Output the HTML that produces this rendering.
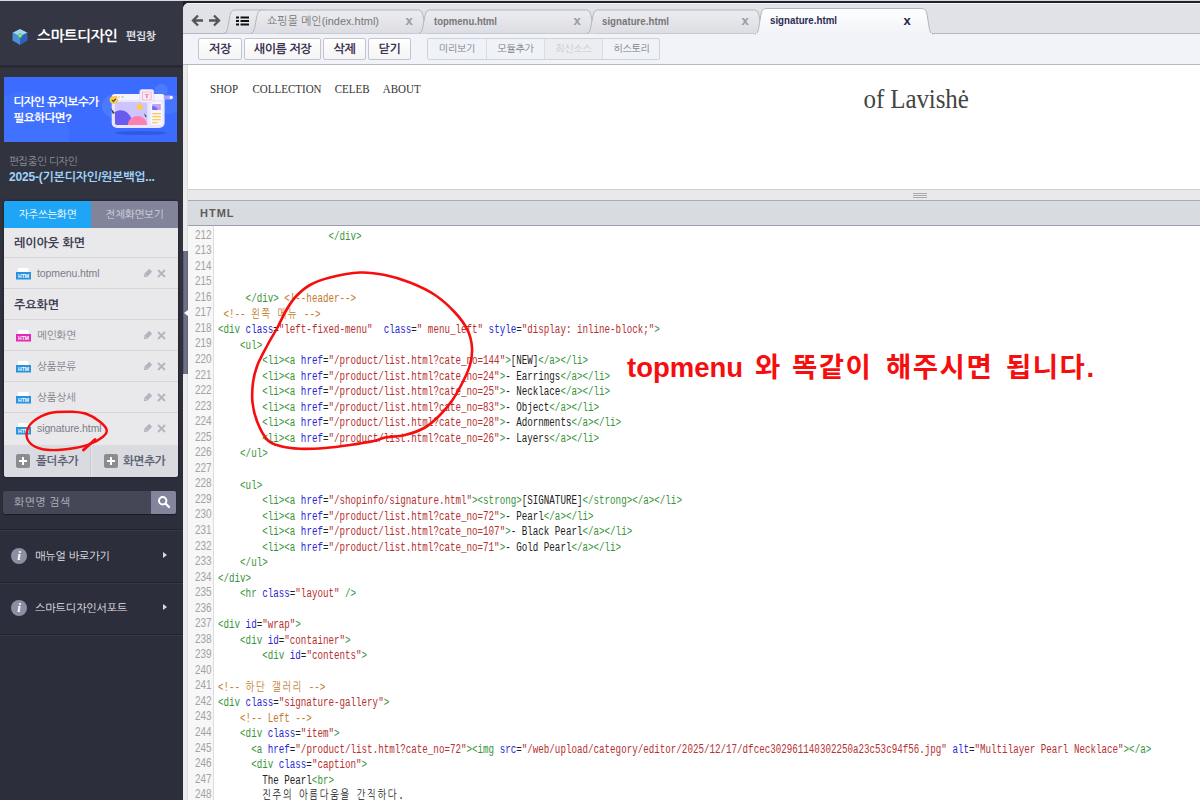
<!DOCTYPE html>
<html lang="ko">
<head>
<meta charset="utf-8">
<title>스마트디자인 편집창</title>
<style>
*{box-sizing:border-box;margin:0;padding:0}
html,body{width:1200px;height:800px;overflow:hidden}
body{position:relative;background:#2c2e3c;font-family:"Liberation Sans","NanumGothic",sans-serif;font-size:11px;color:#333}
.abs{position:absolute}
/* ---------- sidebar ---------- */
#side{position:absolute;left:0;top:0;width:183px;height:800px;background:linear-gradient(#31333f 190px,#2c2e3c 480px)}
#side .head{position:absolute;left:0;top:0;width:183px;height:65.5px;background:#353644;border-bottom:1px solid #2a2b38;box-shadow:0 1px 2px rgba(0,0,0,.35)}
#topline{position:absolute;left:0;top:0;width:1200px;height:1px;background:#d9dade;z-index:9}
#side .title{position:absolute;left:37px;top:26px;font-size:14.8px;font-weight:bold;color:#fff;letter-spacing:-0.5px;white-space:nowrap;line-height:20px}
#side .title2{position:absolute;left:126px;top:28px;font-size:11px;font-weight:bold;color:#e4e4ea;white-space:nowrap;line-height:16px;letter-spacing:-0.5px}
#banner{position:absolute;left:4px;top:77px;width:173px;height:65px;background:#3b6cff;overflow:hidden}
#banner .t{position:absolute;left:9.5px;top:16.5px;color:#fff;font-weight:bold;font-size:11.6px;line-height:16px;letter-spacing:-0.6px;white-space:nowrap}
.lbl1{position:absolute;left:9px;top:153.5px;font-size:10.5px;color:#8f909c;white-space:nowrap;line-height:14px;letter-spacing:-0.5px}
.lbl2{position:absolute;left:9px;top:170px;font-size:12px;font-weight:bold;color:#9fd4fb;white-space:nowrap;line-height:15px;letter-spacing:-0.2px}
#panel{position:absolute;left:4px;top:201px;width:174px;height:276px;background:#e9e9eb;border-radius:3px;overflow:hidden;box-shadow:0 0 3px rgba(0,0,0,.5)}
#panel .tabs{position:absolute;left:0;top:0;width:174px;height:27px;background:#80839a}
#panel .tab{position:absolute;top:0;height:27px;width:87px;text-align:center;line-height:27px;font-size:10.5px;letter-spacing:-0.3px}
#panel .tab.on{left:0;background:#1fa5f6;color:#fff}
#panel .tab.off{left:87px;background:#81849a;color:#d4d5dd}
#panel .row{position:absolute;left:0;width:174px;height:31px;border-top:1px solid #d6d6da}
#panel .row.h{font-weight:bold;font-size:12px;color:#3d3e52;line-height:32px;padding-left:10px;letter-spacing:0px}
#panel .row .nm{position:absolute;left:33px;top:0;line-height:30px;font-size:10.5px;color:#7b7c8a;letter-spacing:-0.1px;white-space:nowrap}
#panel .row svg.ic{position:absolute;left:12px;top:10px}
#panel .row svg.pen{position:absolute;left:139px;top:10px}
#panel .row svg.del{position:absolute;left:153px;top:11px}
#panel .bot{position:absolute;left:0;top:244px;width:174px;height:32px;background:#d9dbe1}
#panel .bot .sep{position:absolute;left:86px;top:0;width:1px;height:32px;background:#c9cbd2;border-right:1px solid #e4e5ea;width:2px}
#panel .bot .plus{position:absolute;top:9px;width:14px;height:14px;border-radius:2px;background:#8b8c8e;color:#fff}
#panel .bot .plus:before{content:"";position:absolute;left:3px;top:6px;width:8px;height:2px;background:#fff}
#panel .bot .plus:after{content:"";position:absolute;left:6px;top:3px;width:2px;height:8px;background:#fff}
#panel .bot .bt{position:absolute;top:0;line-height:32px;font-size:11.6px;font-weight:bold;color:#5d5e70;letter-spacing:-0.3px;white-space:nowrap}
#search{position:absolute;left:3px;top:491px;width:173px;height:23px;background:#454756;border-radius:2px;box-shadow:0 1px 1px rgba(0,0,0,.4)}
#search .ph{position:absolute;left:11px;top:0;line-height:23px;font-size:11px;color:#b4b5bf;letter-spacing:0.3px}
#search .btn{position:absolute;right:0;top:0;width:25px;height:23px;background:#82859b;border-radius:0 2px 2px 0}
.sline{position:absolute;left:0;width:183px;height:2px;background:#20212b;border-bottom:1px solid #363846}
.mi{position:absolute;left:0;width:183px;height:20px}
.mi .c{position:absolute;left:11px;top:2px;width:16px;height:16px;border-radius:8px;background:#8c8ea4;color:#fff;font-family:"Liberation Serif",serif;font-style:italic;font-weight:bold;font-size:13px;line-height:16px;text-align:center}
.mi .tx{position:absolute;left:35px;top:0;line-height:20px;font-size:11px;color:#e3e3ea;letter-spacing:-0.1px;white-space:nowrap}
.mi .ar{position:absolute;left:163px;top:6px;width:0;height:0;border-left:4px solid #d8d9e2;border-top:3.5px solid transparent;border-bottom:3.5px solid transparent}
/* ---------- main ---------- */
#main{position:absolute;left:183px;top:3px;width:1017px;height:797px;background:#e1e2e8;border-top-left-radius:6px;overflow:hidden}
#topdark{position:absolute;left:183px;top:1px;width:1017px;height:6px;background:#20212d}
#tabbar{position:absolute;left:0;top:0;width:1017px;height:31px;background:#e1e2e8;border-bottom:1px solid #b3b5bf;border-top:1px solid #f4f4f7}
#toolbar{position:absolute;left:0;top:31px;width:1017px;height:31px;background:#f2f3f8;border-bottom:1px solid #b5b8c4}
.bbtn{position:absolute;top:4px;height:22px;border:1px solid #c4c5cc;border-radius:2px;background:linear-gradient(#fff,#f4f4f6);font-weight:bold;font-size:12px;color:#3b3350;text-align:center;line-height:20px;letter-spacing:-0.4px;white-space:nowrap}
.sgrp{position:absolute;left:244px;top:4px;width:233px;height:22px;border:1px solid #cfd2da;border-radius:2px;background:#eff2f8;overflow:hidden}
.sgrp span{position:absolute;top:0;width:58px;height:20px;line-height:20px;text-align:center;font-size:10px;color:#7b7c86;border-left:1px solid #d9dce3;letter-spacing:-0.3px}
#leftstrip{position:absolute;left:0;top:62px;width:5px;height:735px;background:#ebebeb;border-right:1px solid #dddde1}
#handle{position:absolute;left:183px;top:251px;width:5px;height:123px;background:linear-gradient(90deg,#50536b 0,#6d7087 30%,#6d7087 75%,#585b73 100%);z-index:6}
#handle:after{content:"";position:absolute;left:0.5px;top:58.5px;border-right:4px solid #fff;border-top:3.5px solid transparent;border-bottom:3.5px solid transparent}
#preview{position:absolute;left:5px;top:62px;width:1012px;height:125px;background:#fff}
#preview .nav{position:absolute;left:22px;top:14.7px;font-family:"Liberation Serif","NanumGothic",serif;font-size:11px;color:#333;white-space:nowrap;line-height:14px;word-spacing:0;transform-origin:0 0;transform:scaleY(1.16)}
#preview .nav span{margin-right:14.4px}
#preview .logo{position:absolute;left:675.5px;top:20.6px;font-family:"Liberation Serif","NanumGothic",serif;font-size:25px;color:#444;white-space:nowrap;line-height:28px;letter-spacing:-0.1px;transform-origin:0 100%;transform:scaleY(1.07)}
#split{position:absolute;left:5px;top:186px;width:1012px;height:11px;background:#e9e9e9;border-top:1px solid #cfcfcf}
#split i{position:absolute;left:725px;width:14px;height:1px;background:#a9a9a9}
#hhead{position:absolute;left:5px;top:197px;width:1012px;height:26px;background:#d8dbe0;border-top:1px solid #a7abb5;border-bottom:1px solid #9b9fab}
#hhead b{position:absolute;left:12px;top:0;line-height:24px;font-size:11px;color:#5c5c5c;letter-spacing:1px}
#code{position:absolute;left:5px;top:223px;width:1012px;height:574px;background:#fff}
#gut{position:absolute;left:0;top:0;width:26px;height:574px;background:#f7f7f7;border-right:1px solid #dedede}
.ln,.cl{position:absolute;height:15.54px;line-height:15.54px;font-family:"Liberation Mono","NanumGothic",monospace;font-size:13px;white-space:pre;transform-origin:0 50%;transform:scaleX(0.708)}
.ln{left:7px;color:#a3a3a3;font-family:"Liberation Sans",sans-serif;font-size:12.2px;transform:scaleX(0.815)}
.cl{left:30px;color:#222;font-size:12.5px;transform:scaleX(0.736)}
.g{color:#37943a}.b{color:#2727d6}.r{color:#b63030}.o{color:#c07a2a}.k{color:#222}
.kr{letter-spacing:2.4px}
</style>
</head>
<body>
<div id="topdark"></div>
<div id="side">
  <div class="head"></div>
  <svg class="abs" style="left:11px;top:28px" width="18" height="18" viewBox="0 0 18 18">
<defs><radialGradient id="cg" cx="0.5" cy="0.45" r="0.35"><stop offset="0" stop-color="#b9ff7a"/><stop offset="0.6" stop-color="#5fd06a"/><stop offset="1" stop-color="#3f9fd6" stop-opacity="0"/></radialGradient></defs>
<path d="M9,1L16.5,4.7L9,8.6L1.5,4.7z" fill="#9fd4f3"/>
<path d="M1.5,4.7L9,8.6V17L1.5,12.6z" fill="#4d8fd6"/>
<path d="M16.5,4.7L9,8.6V17L16.5,12.6z" fill="#2f62b4"/>
<circle cx="9" cy="8" r="4" fill="url(#cg)"/>
</svg>
  <div class="title">스마트디자인</div>
  <div class="title2">편집창</div>
  <div id="banner"><div class="abs" style="left:-25px;top:15px;width:90px;height:90px;border-radius:45px;background:#4a78ff;opacity:.45"></div><svg class="abs" style="left:97.500px;top:7px" width="75.600" height="52" viewBox="0 0 70 52" preserveAspectRatio="none">
<circle cx="12" cy="22" r="12" fill="#5a86ff" opacity="0.55"/><circle cx="55" cy="6" r="6" fill="#5a86ff" opacity="0.6"/><circle cx="62" cy="20" r="10" fill="#4f7dff" opacity="0.5"/>
<ellipse cx="36" cy="49" rx="24" ry="2" fill="#2a4fd0" opacity="0.6"/>
<rect x="9" y="10" width="49" height="34" rx="5" fill="#e9e6ff"/>
<rect x="9" y="10" width="49" height="6" rx="3" fill="#f6f4ff"/>
<circle cx="13" cy="13" r="0.9" fill="#ff8f8f"/><circle cx="16" cy="13" r="0.9" fill="#ffd36b"/><circle cx="19" cy="13" r="0.9" fill="#8fe08f"/>
<rect x="12" y="18" width="30" height="23" rx="2" fill="#cdc5ff"/>
<path d="M12,28c6,-4 12,-1 15,6v7h-13c-1.200,0 -2,-0.800 -2,-2z" fill="#6a5bf0"/>
<path d="M24,41c0,-6 5,-9 9,-9s8,3 9,9z" fill="#ff7fb0"/>
<circle cx="35" cy="23" r="3" fill="#ffc94d"/>
<rect x="45" y="18" width="11" height="23" rx="1.500" fill="#f7f5ff"/>
<rect x="46.500" y="20" width="8" height="6" fill="#b9a8ff"/><path d="M46.500,26v-4c3,0 5,2 5,4z" fill="#7a66f0"/><circle cx="53" cy="24" r="1.200" fill="#ff7fb0"/>
<rect x="46.500" y="29" width="8" height="1.300" fill="#ffc94d"/><rect x="46.500" y="32" width="8" height="1.300" fill="#ffc94d"/><rect x="46.500" y="35" width="8" height="1.300" fill="#ffc94d"/><rect x="46.500" y="38" width="5" height="1.300" fill="#ffc94d"/>
<rect x="35" y="5.500" width="13" height="13" rx="2" fill="#f3efff" stroke="#d9d2ff" stroke-width="0.600"/>
<rect x="37.500" y="8" width="8" height="8" fill="none" stroke="#ff9db5" stroke-width="0.700"/>
<text x="41.500" y="14.500" font-family="'Liberation Serif',serif" font-weight="bold" font-size="6" fill="#ff5c7a" text-anchor="middle">T</text>
<circle cx="11" cy="16" r="4" fill="#ffc94d"/><path d="M9.200,16l1.300,1.400l2.300,-2.600" stroke="#3a3a55" stroke-width="1.100" fill="none"/>
<rect x="57" y="11.500" width="9" height="4" rx="2" fill="#a9a0ff"/><circle cx="64" cy="13.500" r="1.400" fill="#fff"/>
<path d="M8,24l4,5l-2,1z" fill="#3b3f5c"/><path d="M39,29l2.500,3.500l-1.500,0.500z" fill="#3b3f5c"/>
</svg><div class="t">디자인 유지보수가<br>필요하다면?</div></div>
  <div class="lbl1">편집중인 디자인</div>
  <div class="lbl2">2025-(기본디자인/원본백업...</div>
  <div id="panel">
    <div class="tabs"><div class="tab on">자주쓰는화면</div><div class="tab off">전체화면보기</div></div>
    <div class="row h" style="top:26px;border-top:0">레이아웃 화면</div>
    <div class="row" style="top:56px"><svg class="ic" width="15" height="12" viewBox="0 0 15 12"><rect x="2" y="0" width="10.5" height="5" fill="#fff"/><rect x="0.5" y="4.5" width="14" height="6.5" fill="#2a93e0" stroke="#2a93e0"/><text x="7.5" y="10" font-family="'Liberation Sans',sans-serif" font-size="5.5" font-weight="bold" fill="#fff" text-anchor="middle" textLength="11" lengthAdjust="spacingAndGlyphs">HTM</text></svg><span class="nm">topmenu.html</span><svg class="pen" width="10" height="10" viewBox="0 0 10 10"><path d="M6.2,0.8l3,3L4,9H1V6z" fill="#b3b4c0"/><path d="M1.6,6.4l2,2" stroke="#e9e9eb" stroke-width="0.8"/></svg><svg class="del" width="9" height="9" viewBox="0 0 9 9"><path d="M1,1L8,8M8,1L1,8" stroke="#b3b4c0" stroke-width="1.8" fill="none"/></svg></div>
    <div class="row h" style="top:87px">주요화면</div>
    <div class="row" style="top:118px"><svg class="ic" width="15" height="12" viewBox="0 0 15 12"><rect x="2" y="0" width="10.5" height="5" fill="#fff"/><rect x="0.5" y="4.5" width="14" height="6.5" fill="#e32cb5" stroke="#e32cb5"/><text x="7.5" y="10" font-family="'Liberation Sans',sans-serif" font-size="5.5" font-weight="bold" fill="#fff" text-anchor="middle" textLength="11" lengthAdjust="spacingAndGlyphs">HTM</text></svg><span class="nm">메인화면</span><svg class="pen" width="10" height="10" viewBox="0 0 10 10"><path d="M6.2,0.8l3,3L4,9H1V6z" fill="#b3b4c0"/><path d="M1.6,6.4l2,2" stroke="#e9e9eb" stroke-width="0.8"/></svg><svg class="del" width="9" height="9" viewBox="0 0 9 9"><path d="M1,1L8,8M8,1L1,8" stroke="#b3b4c0" stroke-width="1.8" fill="none"/></svg></div>
    <div class="row" style="top:149px"><svg class="ic" width="15" height="12" viewBox="0 0 15 12"><rect x="2" y="0" width="10.5" height="5" fill="#fff"/><rect x="0.5" y="4.5" width="14" height="6.5" fill="#2a93e0" stroke="#2a93e0"/><text x="7.5" y="10" font-family="'Liberation Sans',sans-serif" font-size="5.5" font-weight="bold" fill="#fff" text-anchor="middle" textLength="11" lengthAdjust="spacingAndGlyphs">HTM</text></svg><span class="nm">상품분류</span><svg class="pen" width="10" height="10" viewBox="0 0 10 10"><path d="M6.2,0.8l3,3L4,9H1V6z" fill="#b3b4c0"/><path d="M1.6,6.4l2,2" stroke="#e9e9eb" stroke-width="0.8"/></svg><svg class="del" width="9" height="9" viewBox="0 0 9 9"><path d="M1,1L8,8M8,1L1,8" stroke="#b3b4c0" stroke-width="1.8" fill="none"/></svg></div>
    <div class="row" style="top:180px"><svg class="ic" width="15" height="12" viewBox="0 0 15 12"><rect x="2" y="0" width="10.5" height="5" fill="#fff"/><rect x="0.5" y="4.5" width="14" height="6.5" fill="#2a93e0" stroke="#2a93e0"/><text x="7.5" y="10" font-family="'Liberation Sans',sans-serif" font-size="5.5" font-weight="bold" fill="#fff" text-anchor="middle" textLength="11" lengthAdjust="spacingAndGlyphs">HTM</text></svg><span class="nm">상품상세</span><svg class="pen" width="10" height="10" viewBox="0 0 10 10"><path d="M6.2,0.8l3,3L4,9H1V6z" fill="#b3b4c0"/><path d="M1.6,6.4l2,2" stroke="#e9e9eb" stroke-width="0.8"/></svg><svg class="del" width="9" height="9" viewBox="0 0 9 9"><path d="M1,1L8,8M8,1L1,8" stroke="#b3b4c0" stroke-width="1.8" fill="none"/></svg></div>
    <div class="row" style="top:211px"><svg class="ic" width="15" height="12" viewBox="0 0 15 12"><rect x="2" y="0" width="10.5" height="5" fill="#fff"/><rect x="0.5" y="4.5" width="14" height="6.5" fill="#2a93e0" stroke="#2a93e0"/><text x="7.5" y="10" font-family="'Liberation Sans',sans-serif" font-size="5.5" font-weight="bold" fill="#fff" text-anchor="middle" textLength="11" lengthAdjust="spacingAndGlyphs">HTM</text></svg><span class="nm">signature.html</span><svg class="pen" width="10" height="10" viewBox="0 0 10 10"><path d="M6.2,0.8l3,3L4,9H1V6z" fill="#b3b4c0"/><path d="M1.6,6.4l2,2" stroke="#e9e9eb" stroke-width="0.8"/></svg><svg class="del" width="9" height="9" viewBox="0 0 9 9"><path d="M1,1L8,8M8,1L1,8" stroke="#b3b4c0" stroke-width="1.8" fill="none"/></svg></div>
    <div class="bot"><div class="sep"></div>
      <div class="plus" style="left:12px"></div><div class="bt" style="left:32px">폴더추가</div>
      <div class="plus" style="left:100px"></div><div class="bt" style="left:119px">화면추가</div>
    </div>
  </div>
  <div id="search"><div class="ph">화면명 검색</div><div class="btn"><svg class="abs" style="left:6px;top:4px" width="14" height="14" viewBox="0 0 14 14"><circle cx="5.7" cy="5.7" r="3.7" fill="none" stroke="#fff" stroke-width="2"/><path d="M8.5,8.5L12,12" stroke="#fff" stroke-width="2.4" stroke-linecap="round"/></svg></div></div>
  <div class="sline" style="top:529px"></div>
  <div class="mi" style="top:545.5px"><div class="c">i</div><div class="tx">매뉴얼 바로가기</div><div class="ar"></div></div>
  <div class="sline" style="top:581.5px"></div>
  <div class="mi" style="top:597.5px"><div class="c">i</div><div class="tx">스마트디자인서포트</div><div class="ar"></div></div>
  <div class="sline" style="top:633.5px"></div>
</div>
<div id="main">
  <div id="tabbar"></div>
  <div id="toolbar">
    <div class="bbtn" style="left:15px;width:44px">저장</div>
    <div class="bbtn" style="left:61px;width:77px">새이름 저장</div>
    <div class="bbtn" style="left:140px;width:43px">삭제</div>
    <div class="bbtn" style="left:185px;width:43px">닫기</div>
    <div class="sgrp"><span style="left:0;border-left:0">미리보기</span><span style="left:58px">모듈추가</span><span style="left:116px;color:#c9cbd2;background:#ebedf1">최신소스</span><span style="left:174px">히스토리</span></div>
  </div>
  <div id="leftstrip"></div>
  <div id="preview">
    <div class="nav"><span>SHOP</span><span style="margin-right:13.2px">COLLECTION</span><span style="margin-right:13.2px">CELEB</span><span>ABOUT</span></div>
    <div class="logo">of Lavishė</div>
  </div>
  <div id="split"><i style="top:3px"></i><i style="top:5px"></i><i style="top:7px"></i></div>
  <div id="hhead"><b>HTML</b></div>
  <div id="code"><div id="gut"></div><!--CS-->
<div class="ln" style="top:1.7px">212</div>
<div class="cl" style="top:3.9px">                    <span class="g">&lt;/div</span><span class="g">&gt;</span></div>
<div class="ln" style="top:17.24px">213</div>
<div class="ln" style="top:32.78px">214</div>
<div class="ln" style="top:48.32px">215</div>
<div class="ln" style="top:63.86px">216</div>
<div class="cl" style="top:66.06px">     <span class="g">&lt;/div</span><span class="g">&gt;</span> <span class="o">&lt;!--header--&gt;</span></div>
<div class="ln" style="top:79.4px">217</div>
<div class="cl" style="top:81.6px"> <span class="o">&lt;!-- <span class="kr">왼쪽</span> <span class="kr">메뉴</span> --&gt;</span></div>
<div class="ln" style="top:94.94px">218</div>
<div class="cl" style="top:97.14px"><span class="g">&lt;div</span> <span class="b">class</span><span class="k">=</span><span class="r">"left-fixed-menu"</span>  <span class="b">class</span><span class="k">=</span><span class="r">" menu_left"</span> <span class="b">style</span><span class="k">=</span><span class="r">"display: inline-block;"</span><span class="g">&gt;</span></div>
<div class="ln" style="top:110.48px">219</div>
<div class="cl" style="top:112.68px">    <span class="g">&lt;ul</span><span class="g">&gt;</span></div>
<div class="ln" style="top:126.02px">220</div>
<div class="cl" style="top:128.22px">        <span class="g">&lt;li</span><span class="g">&gt;</span><span class="g">&lt;a</span> <span class="b">href</span><span class="k">=</span><span class="r">"/product/list.html?cate_no=144"</span><span class="g">&gt;</span>[NEW]<span class="g">&lt;/a</span><span class="g">&gt;</span><span class="g">&lt;/li</span><span class="g">&gt;</span></div>
<div class="ln" style="top:141.56px">221</div>
<div class="cl" style="top:143.76px">        <span class="g">&lt;li</span><span class="g">&gt;</span><span class="g">&lt;a</span> <span class="b">href</span><span class="k">=</span><span class="r">"/product/list.html?cate_no=24"</span><span class="g">&gt;</span>- Earrings<span class="g">&lt;/a</span><span class="g">&gt;</span><span class="g">&lt;/li</span><span class="g">&gt;</span></div>
<div class="ln" style="top:157.1px">222</div>
<div class="cl" style="top:159.3px">        <span class="g">&lt;li</span><span class="g">&gt;</span><span class="g">&lt;a</span> <span class="b">href</span><span class="k">=</span><span class="r">"/product/list.html?cate_no=25"</span><span class="g">&gt;</span>- Necklace<span class="g">&lt;/a</span><span class="g">&gt;</span><span class="g">&lt;/li</span><span class="g">&gt;</span></div>
<div class="ln" style="top:172.64px">223</div>
<div class="cl" style="top:174.84px">        <span class="g">&lt;li</span><span class="g">&gt;</span><span class="g">&lt;a</span> <span class="b">href</span><span class="k">=</span><span class="r">"/product/list.html?cate_no=83"</span><span class="g">&gt;</span>- Object<span class="g">&lt;/a</span><span class="g">&gt;</span><span class="g">&lt;/li</span><span class="g">&gt;</span></div>
<div class="ln" style="top:188.18px">224</div>
<div class="cl" style="top:190.38px">        <span class="g">&lt;li</span><span class="g">&gt;</span><span class="g">&lt;a</span> <span class="b">href</span><span class="k">=</span><span class="r">"/product/list.html?cate_no=28"</span><span class="g">&gt;</span>- Adornments<span class="g">&lt;/a</span><span class="g">&gt;</span><span class="g">&lt;/li</span><span class="g">&gt;</span></div>
<div class="ln" style="top:203.72px">225</div>
<div class="cl" style="top:205.92px">        <span class="g">&lt;li</span><span class="g">&gt;</span><span class="g">&lt;a</span> <span class="b">href</span><span class="k">=</span><span class="r">"/product/list.html?cate_no=26"</span><span class="g">&gt;</span>- Layers<span class="g">&lt;/a</span><span class="g">&gt;</span><span class="g">&lt;/li</span><span class="g">&gt;</span></div>
<div class="ln" style="top:219.26px">226</div>
<div class="cl" style="top:221.46px">    <span class="g">&lt;/ul</span><span class="g">&gt;</span></div>
<div class="ln" style="top:234.8px">227</div>
<div class="ln" style="top:250.34px">228</div>
<div class="cl" style="top:252.54px">    <span class="g">&lt;ul</span><span class="g">&gt;</span></div>
<div class="ln" style="top:265.88px">229</div>
<div class="cl" style="top:268.08px">        <span class="g">&lt;li</span><span class="g">&gt;</span><span class="g">&lt;a</span> <span class="b">href</span><span class="k">=</span><span class="r">"/shopinfo/signature.html"</span><span class="g">&gt;</span><span class="g">&lt;strong</span><span class="g">&gt;</span>[SIGNATURE]<span class="g">&lt;/strong</span><span class="g">&gt;</span><span class="g">&lt;/a</span><span class="g">&gt;</span><span class="g">&lt;/li</span><span class="g">&gt;</span></div>
<div class="ln" style="top:281.42px">230</div>
<div class="cl" style="top:283.62px">        <span class="g">&lt;li</span><span class="g">&gt;</span><span class="g">&lt;a</span> <span class="b">href</span><span class="k">=</span><span class="r">"/product/list.html?cate_no=72"</span><span class="g">&gt;</span>- Pearl<span class="g">&lt;/a</span><span class="g">&gt;</span><span class="g">&lt;/li</span><span class="g">&gt;</span></div>
<div class="ln" style="top:296.96px">231</div>
<div class="cl" style="top:299.16px">        <span class="g">&lt;li</span><span class="g">&gt;</span><span class="g">&lt;a</span> <span class="b">href</span><span class="k">=</span><span class="r">"/product/list.html?cate_no=107"</span><span class="g">&gt;</span>- Black Pearl<span class="g">&lt;/a</span><span class="g">&gt;</span><span class="g">&lt;/li</span><span class="g">&gt;</span></div>
<div class="ln" style="top:312.5px">232</div>
<div class="cl" style="top:314.7px">        <span class="g">&lt;li</span><span class="g">&gt;</span><span class="g">&lt;a</span> <span class="b">href</span><span class="k">=</span><span class="r">"/product/list.html?cate_no=71"</span><span class="g">&gt;</span>- Gold Pearl<span class="g">&lt;/a</span><span class="g">&gt;</span><span class="g">&lt;/li</span><span class="g">&gt;</span></div>
<div class="ln" style="top:328.04px">233</div>
<div class="cl" style="top:330.24px">    <span class="g">&lt;/ul</span><span class="g">&gt;</span></div>
<div class="ln" style="top:343.58px">234</div>
<div class="cl" style="top:345.78px"><span class="g">&lt;/div</span><span class="g">&gt;</span></div>
<div class="ln" style="top:359.12px">235</div>
<div class="cl" style="top:361.32px">    <span class="g">&lt;hr</span> <span class="b">class</span><span class="k">=</span><span class="r">"layout"</span> <span class="g">/&gt;</span></div>
<div class="ln" style="top:374.66px">236</div>
<div class="ln" style="top:390.2px">237</div>
<div class="cl" style="top:392.4px"><span class="g">&lt;div</span> <span class="b">id</span><span class="k">=</span><span class="r">"wrap"</span><span class="g">&gt;</span></div>
<div class="ln" style="top:405.74px">238</div>
<div class="cl" style="top:407.94px">    <span class="g">&lt;div</span> <span class="b">id</span><span class="k">=</span><span class="r">"container"</span><span class="g">&gt;</span></div>
<div class="ln" style="top:421.28px">239</div>
<div class="cl" style="top:423.48px">        <span class="g">&lt;div</span> <span class="b">id</span><span class="k">=</span><span class="r">"contents"</span><span class="g">&gt;</span></div>
<div class="ln" style="top:436.82px">240</div>
<div class="ln" style="top:452.36px">241</div>
<div class="cl" style="top:454.56px"><span class="o">&lt;!-- <span class="kr">하단</span> <span class="kr">갤러리</span> --&gt;</span></div>
<div class="ln" style="top:467.9px">242</div>
<div class="cl" style="top:470.1px"><span class="g">&lt;div</span> <span class="b">class</span><span class="k">=</span><span class="r">"signature-gallery"</span><span class="g">&gt;</span></div>
<div class="ln" style="top:483.44px">243</div>
<div class="cl" style="top:485.64px">    <span class="o">&lt;!-- Left --&gt;</span></div>
<div class="ln" style="top:498.98px">244</div>
<div class="cl" style="top:501.18px">    <span class="g">&lt;div</span> <span class="b">class</span><span class="k">=</span><span class="r">"item"</span><span class="g">&gt;</span></div>
<div class="ln" style="top:514.52px">245</div>
<div class="cl" style="top:516.72px">      <span class="g">&lt;a</span> <span class="b">href</span><span class="k">=</span><span class="r">"/product/list.html?cate_no=72"</span><span class="g">&gt;</span><span class="g">&lt;img</span> <span class="b">src</span><span class="k">=</span><span class="r">"/web/upload/category/editor/2025/12/17/dfcec302961140302250a23c53c94f56.jpg"</span> <span class="b">alt</span><span class="k">=</span><span class="r">"Multilayer Pearl Necklace"</span><span class="g">&gt;</span><span class="g">&lt;/a</span><span class="g">&gt;</span></div>
<div class="ln" style="top:530.06px">246</div>
<div class="cl" style="top:532.26px">      <span class="g">&lt;div</span> <span class="b">class</span><span class="k">=</span><span class="r">"caption"</span><span class="g">&gt;</span></div>
<div class="ln" style="top:545.6px">247</div>
<div class="cl" style="top:547.8px">        The Pearl<span class="g">&lt;br</span><span class="g">&gt;</span></div>
<div class="ln" style="top:561.14px">248</div>
<div class="cl" style="top:563.34px">        <span class="kr">진주의</span> <span class="kr">아름다움을</span> <span class="kr">간직하다</span>.</div>
<!--CE--></div>
</div>
<svg id="tabs" class="abs" style="left:0;top:0;z-index:5" width="1200" height="40" viewBox="0 0 1200 40">
<defs>
<linearGradient id="tg" x1="0" y1="0" x2="0" y2="1"><stop offset="0" stop-color="#ececf0"/><stop offset="1" stop-color="#dcdde3"/></linearGradient>
<linearGradient id="ta" x1="0" y1="0" x2="0" y2="1"><stop offset="0" stop-color="#ffffff"/><stop offset="1" stop-color="#f2f3f8"/></linearGradient>
</defs>
<g fill="none" stroke="#555" stroke-width="2.3" stroke-linecap="butt" stroke-linejoin="miter">
<path d="M203,20.5H193.5M198,15.5l-5,5l5,5"/>
<path d="M209,20.5H218.5M214,15.5l5,5l-5,5"/>
</g>
<path d="M224,33.5 q2.5,0 3.5,-5 l2.5,-13.0 q1,-5.5 5,-5.5 H265 q4,0 5,5.5 l2.5,13.0 q1,5 3.5,5" fill="url(#tg)" stroke="#b4b6be" stroke-width="1"/>
<g fill="#111"><rect x="236" y="16.5" width="3" height="2"/><rect x="240.5" y="16.5" width="8.5" height="2"/><rect x="236" y="20" width="3" height="2"/><rect x="240.5" y="20" width="8.5" height="2"/><rect x="236" y="23.5" width="3" height="2"/><rect x="240.5" y="23.5" width="8.5" height="2"/></g>
<path d="M251,33.5 q2.5,0 3.5,-5 l2.5,-13.0 q1,-5.5 5,-5.5 H418 q4,0 5,5.5 l2.5,13.0 q1,5 3.5,5" fill="url(#tg)" stroke="#b4b6be" stroke-width="1"/>
<path d="M419,33.5 q2.5,0 3.5,-5 l2.5,-13.0 q1,-5.5 5,-5.5 H586 q4,0 5,5.5 l2.5,13.0 q1,5 3.5,5" fill="url(#tg)" stroke="#b4b6be" stroke-width="1"/>
<path d="M587,33.5 q2.5,0 3.5,-5 l2.5,-13.0 q1,-5.5 5,-5.5 H754 q4,0 5,5.5 l2.5,13.0 q1,5 3.5,5" fill="url(#tg)" stroke="#b4b6be" stroke-width="1"/>
<path d="M755,34.5 q2.5,0 3.5,-5 l2.5,-15.5 q1,-5.5 5,-5.5 H922 q4,0 5,5.5 l2.5,15.5 q1,5 3.5,5" fill="url(#ta)" stroke="#b4b6be" stroke-width="1"/>
<rect x="756" y="33" width="176" height="2" fill="#f2f3f8"/>
<g font-family="'Liberation Sans','NanumGothic',sans-serif" font-size="11.5" fill="#777">
<text x="267" y="24.5" textLength="112" lengthAdjust="spacingAndGlyphs">쇼핑몰 메인(index.html)</text>
<text x="434" y="24.5" font-weight="bold" textLength="63" lengthAdjust="spacingAndGlyphs">topmenu.html</text>
<text x="602" y="24.5" font-weight="bold" textLength="67" lengthAdjust="spacingAndGlyphs">signature.html</text>
<text x="770" y="24" font-weight="bold" fill="#2b2c52" textLength="67" lengthAdjust="spacingAndGlyphs">signature.html</text>
</g>
<g font-family="'Liberation Sans',sans-serif" font-size="13" font-weight="bold" fill="#9a9ba3">
<text x="405.5" y="25">x</text><text x="573.5" y="25">x</text><text x="741.5" y="25">x</text>
<text x="903.5" y="24.5" fill="#25264a">x</text>
</g>
</svg>
<svg id="anno" class="abs" style="left:0;top:0;z-index:8;pointer-events:none" width="1200" height="800" viewBox="0 0 1200 800">
<path d="M360.0,272.5C369.2,272.1 376.7,273.3 385.0,275.0C393.3,276.7 401.7,279.2 410.0,282.5C418.3,285.8 427.5,290.0 435.0,295.0C442.5,300.0 449.6,306.7 455.0,312.5C460.4,318.3 464.7,324.2 467.5,330.0C470.3,335.8 471.6,341.7 472.0,347.5C472.4,353.3 471.6,359.2 470.0,365.0C468.4,370.8 465.4,376.7 462.5,382.5C459.6,388.3 456.2,394.6 452.5,400.0C448.8,405.4 444.6,410.4 440.0,415.0C435.4,419.6 430.8,424.2 425.0,427.5C419.2,430.8 411.7,433.3 405.0,435.0C398.3,436.7 390.2,436.5 385.0,437.5C379.8,438.5 379.8,439.8 374.0,441.0C368.2,442.2 358.2,443.8 350.0,445.0C341.8,446.2 333.3,447.4 325.0,448.0C316.7,448.6 307.5,449.1 300.0,448.8C292.5,448.4 285.4,447.5 280.0,446.0C274.6,444.5 271.2,443.9 267.5,440.0C263.8,436.1 260.0,428.8 257.5,422.5C255.0,416.2 253.2,409.2 252.5,402.5C251.8,395.8 252.2,388.8 253.0,382.5C253.8,376.2 255.1,371.2 257.5,365.0C259.9,358.8 264.2,351.2 267.5,345.0C270.8,338.8 274.6,332.9 277.5,327.5C280.4,322.1 282.1,317.5 285.0,312.5C287.900,307.5 290.8,302.1 295.0,297.5C299.2,292.9 304.2,288.3 310.0,285.0C315.8,281.7 321.7,279.6 330.0,277.5C338.3,275.4 350.8,272.9 360.0,272.5Z" fill="none" stroke="#f60d0d" stroke-width="2.6" stroke-linejoin="round"/>
<path d="M71.7,411.7C68.1,411.9 56.5,411.3 50.0,413.0C43.5,414.7 36.9,418.4 33.0,421.7C29.1,425.0 27.2,429.4 26.7,433.0C26.2,436.6 27.5,440.3 30.0,443.0C32.5,445.7 37.0,447.8 41.7,449.0C46.4,450.2 52.5,450.2 58.0,450.0C63.5,449.8 69.7,449.0 75.0,448.0C80.3,447.0 85.3,445.9 90.0,444.0C94.7,442.1 100.2,439.0 103.0,436.7C105.8,434.4 107.2,432.5 106.7,430.0C106.2,427.5 103.3,424.4 100.0,421.7C96.7,419.0 91.4,415.7 86.7,414.0C82.0,412.3 76.2,412.0 71.7,411.7C67.2,411.4 62.0,411.9 60.0,412.0" fill="none" stroke="#f60d0d" stroke-width="2.4" stroke-linecap="round" stroke-linejoin="round"/>
<path d="M95,439.500L83.500,450" fill="none" stroke="#f60d0d" stroke-width="3" stroke-linecap="round"/>
<g font-family="'Liberation Sans','Noto Sans CJK KR',sans-serif" font-weight="bold" font-size="27.5" fill="#f60d0d"><text x="627" y="377">topmenu</text><text x="755" y="377">와</text><text x="792" y="377" letter-spacing="1.5">똑같이</text><text x="886" y="377" letter-spacing="1.5">해주시면</text><text x="1006" y="377" letter-spacing="1.5">됩니다.</text></g>
</svg>
<div id="handle"></div>
<div id="topline"></div>
</body>
</html>
